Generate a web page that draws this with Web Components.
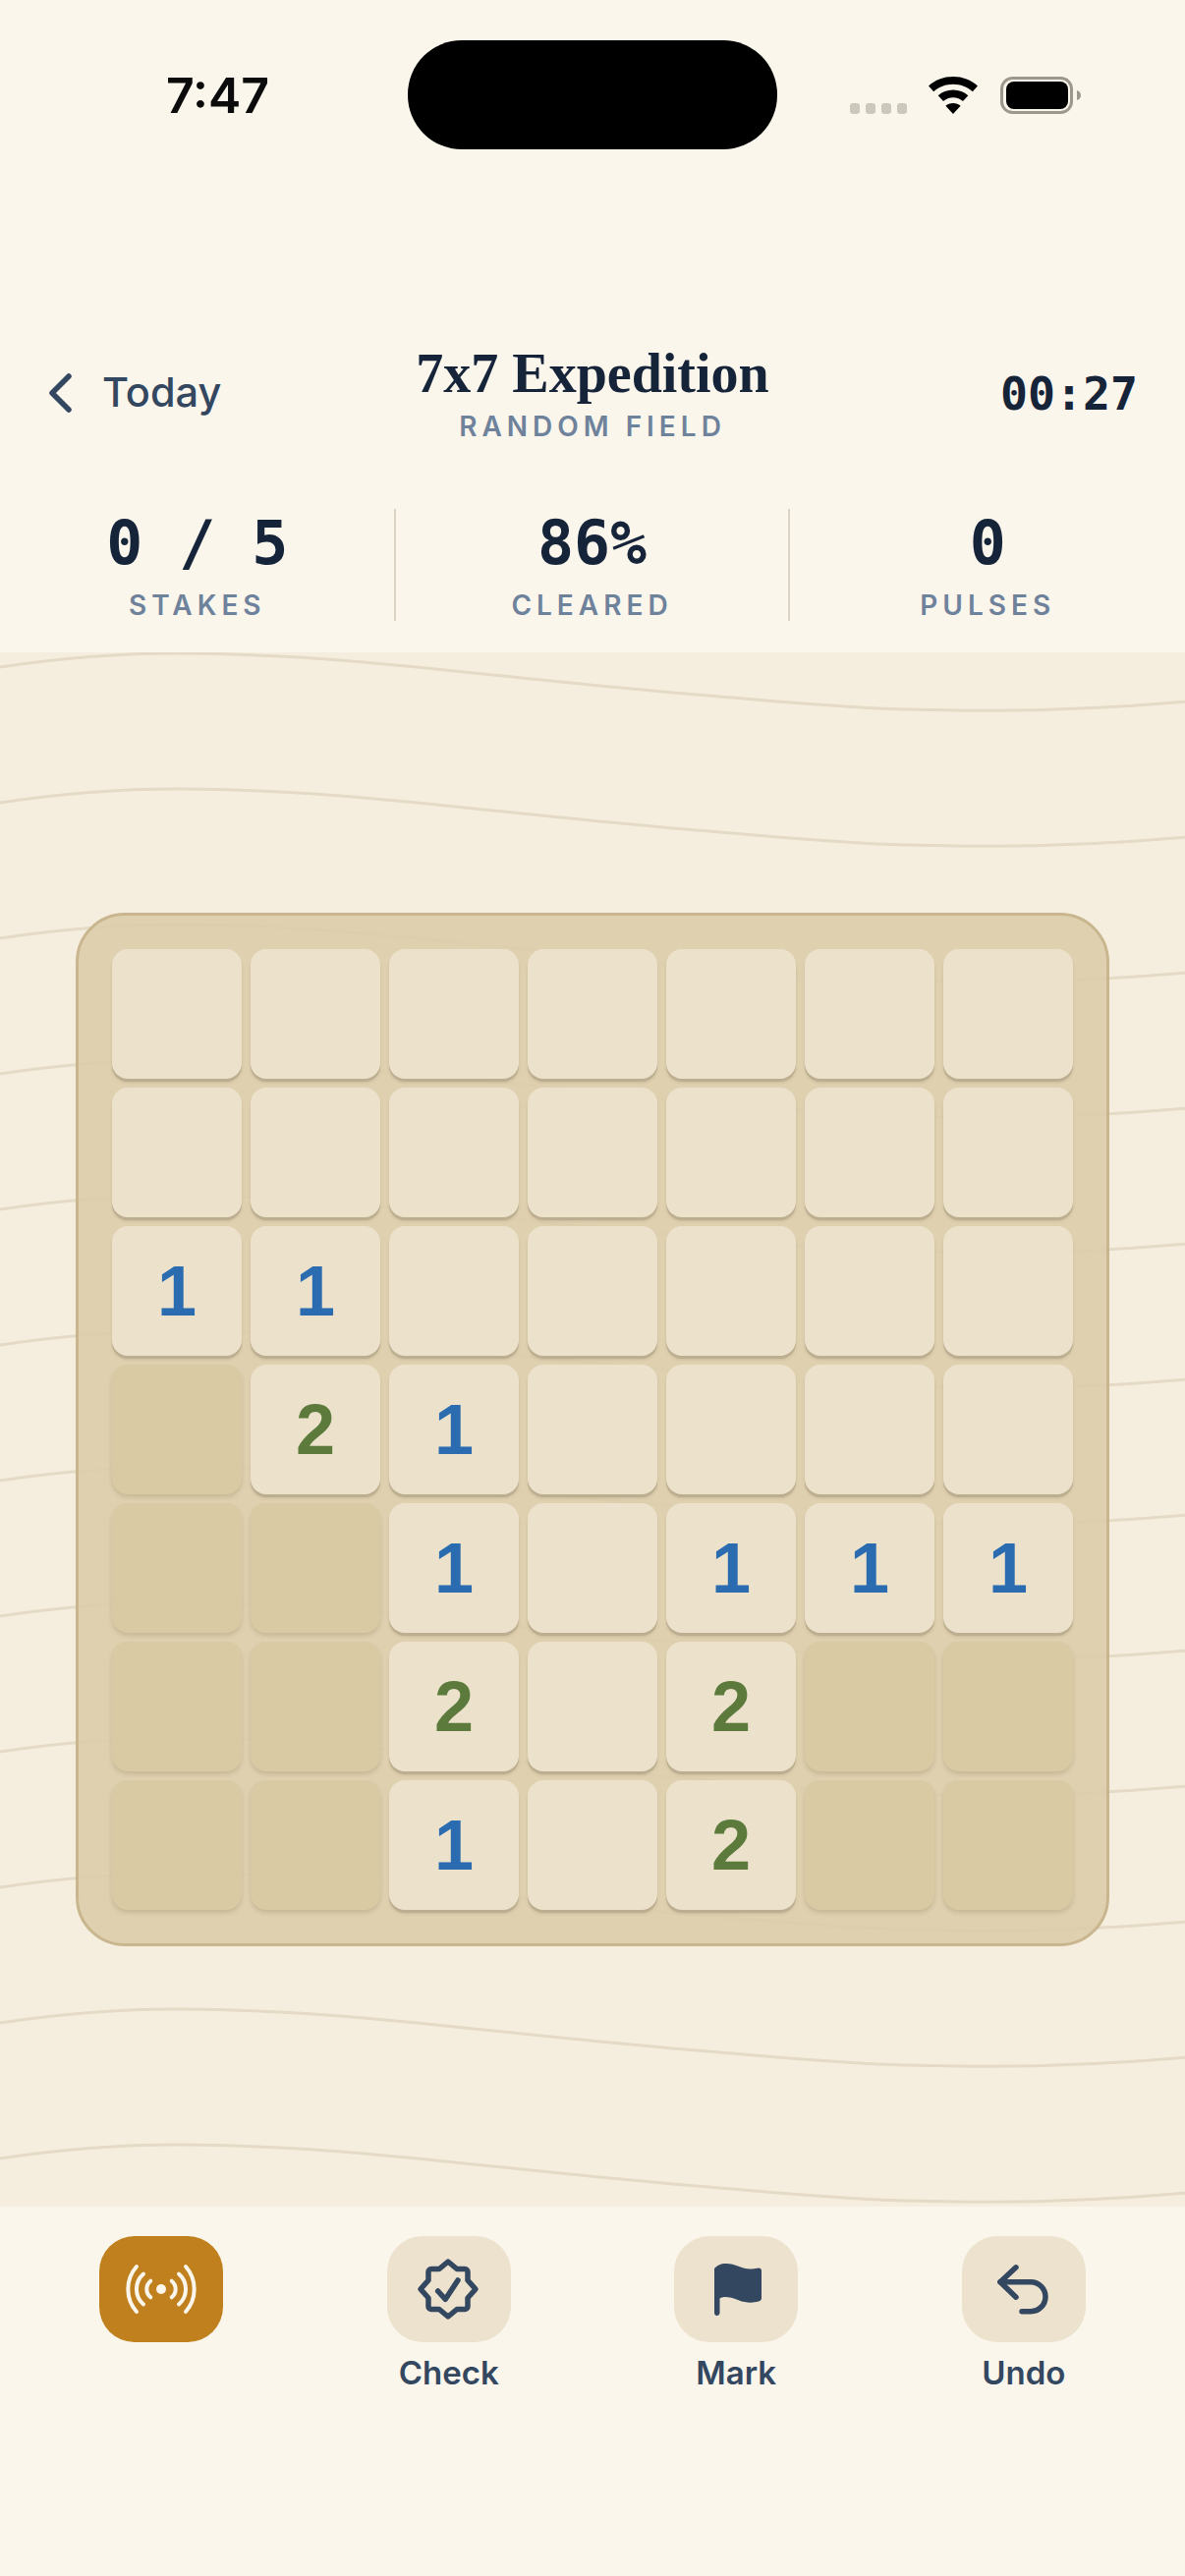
<!DOCTYPE html>
<html>
<head>
<meta charset="utf-8">
<title>7x7 Expedition</title>
<style>
  html, body { margin: 0; padding: 0; background: #fbf6ec; }
  body { width: 1206px; height: 2622px; font-family: Inter, "Noto Sans", sans-serif; }
  game-screen { height: 2622px; }
</style>
</head>
<body>
<game-screen>
  <status-bar slot="status" time="7:47"></status-bar>
  <game-header slot="header" title="7x7 Expedition" sub="RANDOM FIELD" clock="00:27" back="Today"></game-header>
  <stat-row slot="stats">
    <stat-item value="0 / 5" label="STAKES"></stat-item>
    <stat-item value="86%" label="CLEARED"></stat-item>
    <stat-item value="0" label="PULSES"></stat-item>
  </stat-row>
  <field-area slot="field">
    <game-board rows="....... ....... 11..... x21.... xx1.111 xx2.2xx xx1.2xx"></game-board>
  </field-area>
  <tool-bar slot="tools">
    <tool-button icon="pulse" active></tool-button>
    <tool-button icon="check" label="Check"></tool-button>
    <tool-button icon="flag" label="Mark"></tool-button>
    <tool-button icon="undo" label="Undo"></tool-button>
  </tool-bar>
</game-screen>

<script>
const SANS = `Inter, "Noto Sans", sans-serif`;
const MONO = `"DejaVu Sans Mono", "Liberation Mono", monospace`;

class GameScreen extends HTMLElement {
  constructor() {
    super();
    this.attachShadow({ mode: "open" });
  }
  connectedCallback() {
    this.shadowRoot.innerHTML = `
    <style>
      :host { display: flex; flex-direction: column; width: 1206px; background: #fbf6ec; overflow: hidden; }
    </style>
    <slot name="status"></slot>
    <slot name="header"></slot>
    <slot name="stats"></slot>
    <slot name="field"></slot>
    <slot name="tools"></slot>
    `;
  }
}

class StatusBar extends HTMLElement {
  constructor() {
    super();
    this.attachShadow({ mode: "open" });
  }
  connectedCallback() {
    this.shadowRoot.innerHTML = `
    <style>
      :host { display: grid; grid-template-columns: 415px 376px 1fr; height: 330px; box-sizing: border-box; padding-top: 41px; align-items: start; }
      .time { font: 600 50px/1 ${SANS}; color: #0b0b0b; text-align: center; padding: 31px 0 0 28px; }
      .island { height: 111px; background: #000; border-radius: 55px; }
      .right { display: flex; align-items: flex-end; padding: 37px 0 0 74px; }
      .dots { display: flex; gap: 6px; margin-right: 21px; }
      .dots i { width: 10px; height: 11px; border-radius: 3px; background: #cdc8bc; }
      svg { display: block; }
      .wifi { margin-right: 22px; }
    </style>
    <div class="time">${this.getAttribute("time")}</div>
    <div class="island"></div>
    <div class="right">
      <div class="dots"><i></i><i></i><i></i><i></i></div>
      <svg class="wifi" width="52" height="38" viewBox="0 0 52 38"><path d="M26 0C16.2 0 7.6 3.4 1 9.4l5.200 5.800C11.600 10.400 18.400 7.700 26 7.700s14.400 2.700 19.800 7.500L51 9.400C44.400 3.400 35.800 0 26 0zM26 13.500c-6 0-11.300 2.100-15.300 5.700l5.300 5.900c2.700-2.400 6.100-3.800 10-3.800s7.300 1.400 10 3.800l5.300-5.900c-4-3.600-9.300-5.700-15.300-5.700zM26 27c-3 0-5.600 1-7.600 2.800L26 38l7.600-8.200C31.600 28 29 27 26 27z" fill="#000"/></svg>
      <svg width="82" height="38" viewBox="0 0 82 38"><rect x="1.500" y="1.500" width="71" height="35" rx="11" fill="none" stroke="#9d988d" stroke-width="3"/><rect x="6" y="5" width="63" height="28" rx="8" fill="#000"/><path d="M78 14c2.500.6 4 2.600 4 5s-1.500 4.400-4 5z" fill="#9d988d"/></svg>
    </div>
    `;
  }
}

class GameHeader extends HTMLElement {
  constructor() {
    super();
    this.attachShadow({ mode: "open" });
  }
  connectedCallback() {
    this.shadowRoot.innerHTML = `
    <style>
      :host { display: grid; grid-template-columns: 1fr auto 1fr; align-items: center; height: 120px; box-sizing: border-box; padding: 18px 48px 0; color: #16243a; }
      .back { display: flex; align-items: center; gap: 30px; font: 500 41.500px/1 ${SANS}; color: #334760; }
      .back svg { display: block; }
      .mid { text-align: center; }
      h1 { margin: 0; font: 700 56px/64px "Liberation Serif", serif; color: #16243a; }
      .sub { font: 600 28px/34px ${SANS}; letter-spacing: 5px; color: #6f829c; margin-top: 5px; }
      .clock { justify-self: end; padding-top: 4px; font: 700 46.500px/1 ${MONO}; color: #16243a; }
    </style>
    <div class="back">
      <svg width="26" height="40" viewBox="0 0 26 40"><path d="M22 3 5 20l17 17" fill="none" stroke="#334760" stroke-width="5.500" stroke-linecap="round" stroke-linejoin="round"/></svg>
      <span>${this.getAttribute("back")}</span>
    </div>
    <div class="mid">
      <h1>${this.getAttribute("title")}</h1>
      <div class="sub">${this.getAttribute("sub")}</div>
    </div>
    <div class="clock">${this.getAttribute("clock")}</div>
    `;
  }
}

class StatRow extends HTMLElement {
  constructor() {
    super();
    this.attachShadow({ mode: "open" });
  }
  connectedCallback() {
    this.shadowRoot.innerHTML = `
    <style>
      :host { display: grid; grid-template-columns: repeat(3, 1fr); height: 214px; box-sizing: border-box; padding: 68px 0 18px 1px; }
      ::slotted(stat-item:not(:last-child)) { border-right: 2px solid #dbd4c5; }
    </style>
    <slot></slot>
    `;
  }
}

class StatItem extends HTMLElement {
  constructor() {
    super();
    this.attachShadow({ mode: "open" });
  }
  connectedCallback() {
    this.shadowRoot.innerHTML = `
    <style>
      :host { display: flex; flex-direction: column; align-items: center; box-sizing: border-box; height: 114px; }
      .value { font: 700 61.500px/70px ${MONO}; color: #16243a; white-space: pre; }
      .label { font: 600 28px/34px ${SANS}; letter-spacing: 5px; color: #6f829c; margin-top: 11px; }
    </style>
    <div class="value">${this.getAttribute("value")}</div>
    <div class="label">${this.getAttribute("label")}</div>
    `;
  }
}

class FieldArea extends HTMLElement {
  constructor() {
    super();
    this.attachShadow({ mode: "open" });
  }
  connectedCallback() {
    this.shadowRoot.innerHTML = `
    <style>
      :host { display: flex; position: relative; height: 1582px; background: #f5eede; align-items: center; justify-content: center; overflow: hidden; }
      svg { position: absolute; inset: 0; display: block; }
      ::slotted(*) { position: relative; }
    </style>
    <svg width="1206" height="1582">
      <defs>
        <pattern id="waves" width="1206" height="138" patternUnits="userSpaceOnUse" y="-4">
          <path transform="translate(0 4)" d="M0 15C60 6 120 1 180 1C260 1 330 6 400 12.700C503 22.600 605 34.600 708 43C772 48 840 55 906 57.500C940 58.500 975 59.300 1007 59.300C1075 59.300 1140 56 1206 50.300" fill="none" stroke="#e4dac6" stroke-width="3"/>
        </pattern>
      </defs>
      <rect width="1206" height="1582" fill="url(#waves)"/>
    </svg>
    <slot></slot>
    `;
  }
}

class GameBoard extends HTMLElement {
  constructor() {
    super();
    this.attachShadow({ mode: "open" });
  }
  connectedCallback() {
    const cells = this.getAttribute("rows").replace(/ /g, "").split("").map((c) => {
      if (c === "x") return `<board-cell covered></board-cell>`;
      if (c === ".") return `<board-cell></board-cell>`;
      return `<board-cell n="${c}"></board-cell>`;
    }).join("");
    this.shadowRoot.innerHTML = `
    <style>
      :host { display: grid; grid-template-columns: repeat(7, 132px); grid-auto-rows: 132px; gap: 9px; padding: 34px; border: 3px solid #c9b68f; border-radius: 50px; background: rgba(221, 206, 172, 0.93); }
    </style>
    ${cells}
    `;
  }
}

class BoardCell extends HTMLElement {
  constructor() {
    super();
    this.attachShadow({ mode: "open" });
  }
  connectedCallback() {
    const n = this.getAttribute("n");
    this.shadowRoot.innerHTML = `
    <style>
      :host { display: flex; align-items: center; justify-content: center; border-radius: 16px; background: #ece2cc; box-shadow: 0 3px 0 #bcae90, 0 4px 3px rgba(120, 100, 60, 0.2); font: 700 72px/1 "Liberation Sans", Arial, sans-serif; }
      :host([covered]) { background: #d9caa4; box-shadow: 0 3px 4px rgba(120, 100, 60, 0.22); }
      :host([n="1"]) { color: #2b6cb0; }
      :host([n="2"]) { color: #5c7a3c; }
    </style>
    ${n || ""}
    `;
  }
}

class ToolBar extends HTMLElement {
  constructor() {
    super();
    this.attachShadow({ mode: "open" });
  }
  connectedCallback() {
    this.shadowRoot.innerHTML = `
    <style>
      :host { display: grid; grid-template-columns: repeat(4, 1fr); height: 376px; box-sizing: border-box; padding: 30px 18px 0; align-items: start; }
    </style>
    <slot></slot>
    `;
  }
}

const ICONS = {
  pulse: `<svg width="72" height="48" viewBox="0 0 72 48" fill="none" stroke="#fbf6ec" stroke-width="4" stroke-linecap="round"><circle cx="36" cy="24" r="5" fill="#fbf6ec" stroke="none"/><path d="M25.300 15.700A10.600 10.600 0 0 0 25.300 32.300M46.700 15.700A10.600 10.600 0 0 1 46.700 32.300"/><path d="M18 8.500A20.600 20.600 0 0 0 18 39.500M54 8.500A20.600 20.600 0 0 1 54 39.500"/><path d="M11 1A34.800 34.800 0 0 0 11 47M61 1A34.800 34.800 0 0 1 61 47"/></svg>`,
  check: `<svg width="64" height="64" viewBox="0 0 64 64" fill="none" stroke="#334760" stroke-width="5.500" stroke-linecap="round" stroke-linejoin="round" style="margin-left:-2px"><path d="M32 4 41 11.500H49a3 3 0 0 1 3 3V23L60 32 52 41V49.500a3 3 0 0 1-3 3H41L32 60 23 52.500H15a3 3 0 0 1-3-3V41L4 32 12 23V14.500a3 3 0 0 1 3-3H23z"/><path d="M21.700 34 29.300 42.300 42 23"/></svg>`,
  flag: `<svg width="48" height="53" viewBox="0 0 48 53" style="margin-left:4px"><path d="M0 5C3 2 6 0 12 0C22 0 28 6 38 5.500C41 5.500 43 4.500 45 4.500C47 4.500 48 5.500 48 7.500V35C48 37 47 38 45 38.500C41 39.500 38 40 34 39.500C25 39 20 34 11 34C9 34 7 34.500 5.500 35.500V50C5.500 52 4 53 2.700 53C1.200 53 0 52 0 50Z" fill="#334760"/></svg>`,
  undo: `<svg width="52" height="51" viewBox="0 0 52 51" fill="none" stroke="#334760" stroke-width="5.500" stroke-linecap="round" stroke-linejoin="round" style="margin-left:-2px"><path d="M19 2.800 3 17.700l16 15.500"/><path d="M3 17.700h31a15 15 0 0 1 0 30h-9"/></svg>`,
};

class ToolButton extends HTMLElement {
  constructor() {
    super();
    this.attachShadow({ mode: "open" });
  }
  connectedCallback() {
    const label = this.getAttribute("label");
    this.shadowRoot.innerHTML = `
    <style>
      :host { display: flex; flex-direction: column; align-items: center; gap: 10px; }
      .tile { width: 126px; height: 108px; border-radius: 36px; background: #ece2cd; display: flex; align-items: center; justify-content: center; }
      :host([active]) .tile { background: #c1801e; }
      .label { font: 600 33px/42px ${SANS}; color: #334760; }
      svg { display: block; overflow: visible; }
    </style>
    <div class="tile">${ICONS[this.getAttribute("icon")]}</div>
    ${label ? `<div class="label">${label}</div>` : ""}
    `;
  }
}

customElements.define("game-screen", GameScreen);
customElements.define("status-bar", StatusBar);
customElements.define("game-header", GameHeader);
customElements.define("stat-row", StatRow);
customElements.define("stat-item", StatItem);
customElements.define("field-area", FieldArea);
customElements.define("game-board", GameBoard);
customElements.define("board-cell", BoardCell);
customElements.define("tool-bar", ToolBar);
customElements.define("tool-button", ToolButton);
</script>
</body>
</html>
